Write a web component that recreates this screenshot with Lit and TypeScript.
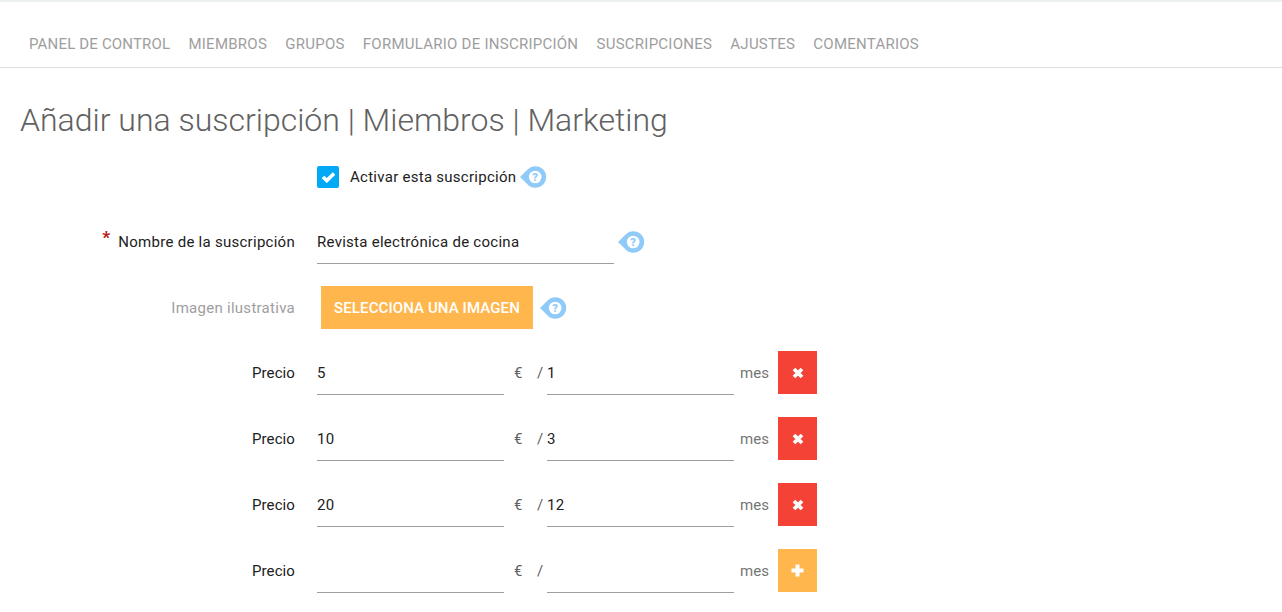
import { LitElement, html, css, svg } from "lit";
import { customElement } from "lit/decorators.js";

const help = html`<svg class="help" width="28" height="24" viewBox="0 0 28 24">
  <path d="M1 12 L8.6 4.5 A10.8 10.8 0 1 1 8.6 19.5 Z" fill="#90caf9"/>
  <circle cx="16.2" cy="12" r="6.3" fill="#fff"/>
  ${svg`<text x="16.2" y="16" text-anchor="middle" class="q">?</text>`}
</svg>`;

const prices = [
  { a: "5", b: "1" },
  { a: "10", b: "3" },
  { a: "20", b: "12" },
  { a: "", b: "" },
];

@customElement("app-root")
export class AppRoot extends LitElement {
  static styles = css`
    :host {
      display: block;
      padding-bottom: 20px;
      font-family: Roboto, "Liberation Sans", sans-serif;
      font-size: 15px;
      letter-spacing: 0.27px;
      color: #212121;
      background: #fff;
    }
    .strip { height: 2px; background: #ecf0f1; }
    nav {
      display: flex;
      gap: 18.2px;
      height: 32px;
      padding: 33px 0 0 29px;
      border-bottom: 1px solid #dddddd;
      font-size: 15px;
      letter-spacing: 0.25px;
      line-height: 18px;
      color: #9e9e9e;
    }
    nav span:first-child { letter-spacing: 0.17px; }
    h1 {
      margin: 0;
      padding: 32px 0 0 20px;
      font-size: 32px;
      letter-spacing: 0;
      line-height: 40px;
      font-weight: 300;
      color: #616161;
    }
    .row { display: flex; align-items: center; height: 43px; }
    .label {
      width: 295px;
      margin-right: 22px;
      flex: none;
      text-align: right;
      color: #212121;
    }
    .muted { color: #9e9e9e; }
    .r2 .label { margin-bottom: 2px; }
    .rp .label { letter-spacing: 0.1px; }
    .req {
      color: #b71c1c;
      font-weight: 900;
      font-size: 17px;
      line-height: 0;
      margin-right: 8px;
      vertical-align: 4px;
    }
    .r1 { margin-top: 15px; }
    .r2 { margin-top: 23px; }
    .r3 { margin-top: 22px; }
    .rp { margin-top: 22px; }
    .rp + .rp { margin-top: 23px; }
    .check {
      width: 22px;
      height: 22px;
      border-radius: 2px;
      background: #03a9f4;
      display: flex;
      align-items: center;
      justify-content: center;
      margin-right: 11px;
    }
    input {
      display: block;
      box-sizing: border-box;
      border: 0;
      border-bottom: 1px solid #9e9e9e;
      outline: none;
      background: transparent;
      font: inherit;
      letter-spacing: inherit;
      color: #212121;
    }
    .wide { width: 297px; height: 43px; padding: 0 0 1px; }
    .short { width: 187px; height: 44px; padding: 1px 0; align-self: flex-start; }
    .help { flex: none; display: block; }
    .h1 { margin-left: 3px; display: flex; }
    .h2 { margin-left: 2.6px; margin-bottom: 1px; display: flex; }
    .h3 { margin-left: 6.4px; display: flex; }
    .q { font-size: 11px; font-weight: 900; fill: #90caf9; font-family: Roboto, sans-serif; }
    .pick {
      height: 43px;
      width: 212px;
      margin-left: 4px;
      border: 0;
      padding: 0;
      background: #ffb74d;
      color: #fff;
      font: inherit;
      font-size: 15px;
      font-weight: 500;
      letter-spacing: 0.1px;
    }
    .euro { width: 12px; margin-left: 10px; color: #616161; }
    .slash { margin-left: 11px; width: 10px; color: #616161; }
    .mes { margin-left: 6px; width: 38px; color: #757575; letter-spacing: 0.1px; }
    .act {
      width: 39px;
      height: 43px;
      display: flex;
      align-items: center;
      justify-content: center;
      color: #fff;
    }
    .del { background: #f44336; }
    .add { background: #ffb74d; }
  `;

  render() {
    return html`
      <div class="strip"></div>
      <nav>
        <span>PANEL DE CONTROL</span><span>MIEMBROS</span><span>GRUPOS</span>
        <span>FORMULARIO DE INSCRIPCIÓN</span><span>SUSCRIPCIONES</span>
        <span>AJUSTES</span><span>COMENTARIOS</span>
      </nav>
      <h1>Añadir una suscripción | Miembros | Marketing</h1>
      <div class="row r1">
        <div class="label"></div>
        <div class="check">
          <svg width="15" height="12" viewBox="0 0 15 12"><path d="M2 6 L5.8 9.6 L13 2.4" fill="none" stroke="#fff" stroke-width="3.6"/></svg>
        </div>
        <span>Activar esta suscripción</span>
        <span class="h1">${help}</span>
      </div>
      <div class="row r2">
        <div class="label"><span class="req">*</span>Nombre de la suscripción</div>
        <input class="wide" value="Revista electrónica de cocina" />
        <span class="h2">${help}</span>
      </div>
      <div class="row r3">
        <div class="label muted">Imagen ilustrativa</div>
        <button class="pick">SELECCIONA UNA IMAGEN</button>
        <span class="h3">${help}</span>
      </div>
      ${prices.map(
        (p, i) => html`<div class="row rp">
          <div class="label">Precio</div>
          <input class="short" .value=${p.a} />
          <span class="euro">€</span>
          <span class="slash">/</span>
          <input class="short" .value=${p.b} />
          <span class="mes">mes</span>
          <div class="act ${i < 3 ? "del" : "add"}">
            ${i < 3
              ? html`<svg width="12" height="12" viewBox="0 0 12 12"><path d="M2 2 L10 10 M10 2 L2 10" stroke="#fff" stroke-width="3.8" fill="none"/></svg>`
              : html`<svg width="13" height="13" viewBox="0 0 13 13"><path d="M6.5 0.5 V12.5 M0.5 6.5 H12.5" stroke="#fff" stroke-width="4" fill="none"/></svg>`}
          </div>
        </div>`
      )}
    `;
  }
}
